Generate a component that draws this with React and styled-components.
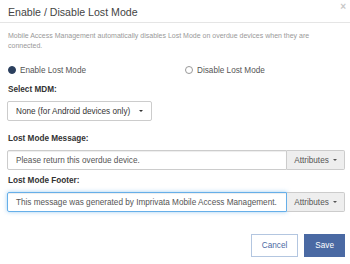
import styled, { createGlobalStyle } from 'styled-components';

const GlobalStyle = createGlobalStyle`
  html, body {
    margin: 0;
    padding: 0;
    background: #fff;
  }
  body {
    font-family: 'Liberation Sans', Arial, sans-serif;
    color: #333;
  }
  * {
    box-sizing: border-box;
  }
`;

// Styled Components
const Modal = styled.div`
  width: 350px;
  height: 264px;
  background: #fff;
  overflow: hidden;
`;

const Header = styled.div`
  position: relative;
  height: 23px;
  padding: 5px 8px 0 8px;
  border-bottom: 1px solid #e5e5e5;
`;

const Title = styled.h4`
  margin: 0;
  font-size: 10.6px;
  line-height: 15px;
  font-weight: 400;
  color: #444;
`;

const Close = styled.button`
  position: absolute;
  top: 1px;
  right: 4px;
  border: 0;
  padding: 0;
  background: none;
  font-family: 'Liberation Sans', Arial, sans-serif;
  font-size: 10px;
  font-weight: 700;
  line-height: 12px;
  color: #c8c8c8;
`;

const Body = styled.div`
  padding: 8px 5px 0 7px;
`;

const Intro = styled.p`
  margin: 0 0 13px 1px;
  font-size: 7px;
  line-height: 10px;
  color: #999;
`;

const RadioRow = styled.div`
  display: grid;
  grid-template-columns: 177px 1fr;
  margin: 0 0 8px 1px;
`;

const RadioLabel = styled.label`
  display: flex;
  align-items: center;
  gap: 4px;
  height: 12px;
  font-size: 8.2px;
  color: #555;
`;

const Dot = styled.span`
  width: 8px;
  height: 8px;
  border-radius: 50%;
  border: 1px solid ${({ $on }) => ($on ? '#2b3f5e' : '#999')};
  background: ${({ $on }) => ($on ? '#2b3f5e' : '#fff')};
`;

const FieldLabel = styled.div`
  margin: 0 0 5px 1px;
  font-size: 8.2px;
  line-height: 12px;
  font-weight: 700;
  color: #333;
`;

const SelectBtn = styled.button`
  display: flex;
  align-items: center;
  justify-content: space-between;
  width: 145px;
  height: 20px;
  padding: 0 8px;
  margin-bottom: 12px;
  border: 1px solid #ccc;
  border-radius: 2px;
  background: #fff;
  font-family: 'Liberation Sans', Arial, sans-serif;
  font-size: 8.2px;
  color: #333;
`;

const Caret = styled.span`
  width: 0;
  height: 0;
  border-left: 2px solid transparent;
  border-right: 2px solid transparent;
  border-top: 2px solid #333;
`;

const InputGroup = styled.div`
  display: flex;
  height: 20px;
  margin-bottom: ${({ $mb }) => $mb ?? 0}px;
`;

const TextInput = styled.div`
  flex: 1;
  display: flex;
  align-items: center;
  padding: 0 8px;
  border: 1px solid ${({ $focus }) => ($focus ? '#66afe9' : '#ccc')};
  border-radius: 2px 0 0 2px;
  box-shadow: ${({ $focus }) =>
    $focus ? 'inset 0 1px 1px rgba(0,0,0,.075), 0 0 4px rgba(102,175,233,.6)' : 'inset 0 1px 1px rgba(0,0,0,.075)'};
  font-size: 8.2px;
  color: #555;
  white-space: nowrap;
  overflow: hidden;
`;

const Addon = styled.div`
  display: flex;
  align-items: center;
  justify-content: center;
  gap: 4px;
  width: 58px;
  border: 1px solid #ccc;
  border-left: 0;
  border-radius: 0 2px 2px 0;
  background: #eee;
  font-size: 8.2px;
  color: #555;
`;

const AddonCaret = styled(Caret)`
  border-top-color: #555;
`;

const Footer = styled.div`
  display: flex;
  justify-content: flex-end;
  gap: 6px;
  padding: 22px 5px 0 0;
`;

const Button = styled.button`
  height: 23px;
  padding: 0 10px;
  border: 1px solid ${({ $primary }) => ($primary ? '#4a69a3' : '#b3c6e0')};
  border-radius: 0;
  background: ${({ $primary }) => ($primary ? '#4a69a3' : '#fff')};
  color: ${({ $primary }) => ($primary ? '#fff' : '#4a69a3')};
  font-family: 'Liberation Sans', Arial, sans-serif;
  font-size: 8.2px;
`;

const App = () => {
  return (
    <Modal>
      <GlobalStyle />
      <Header>
        <Title>Enable / Disable Lost Mode</Title>
        <Close>×</Close>
      </Header>

      <Body>
        <Intro>
          Mobile Access Management automatically disables Lost Mode on overdue devices when they are
          connected.
        </Intro>

        <RadioRow>
          <RadioLabel>
            <Dot $on />
            Enable Lost Mode
          </RadioLabel>
          <RadioLabel>
            <Dot />
            Disable Lost Mode
          </RadioLabel>
        </RadioRow>

        <FieldLabel>Select MDM:</FieldLabel>
        <SelectBtn>
          None (for Android devices only)
          <Caret />
        </SelectBtn>

        <FieldLabel>Lost Mode Message:</FieldLabel>
        <InputGroup $mb={5}>
          <TextInput>Please return this overdue device.</TextInput>
          <Addon>
            Attributes
            <AddonCaret />
          </Addon>
        </InputGroup>

        <FieldLabel>Lost Mode Footer:</FieldLabel>
        <InputGroup>
          <TextInput $focus>This message was generated by Imprivata Mobile Access Management.</TextInput>
          <Addon>
            Attributes
            <AddonCaret />
          </Addon>
        </InputGroup>
      </Body>

      <Footer>
        <Button>Cancel</Button>
        <Button $primary>Save</Button>
      </Footer>
    </Modal>
  );
};

export default App;
